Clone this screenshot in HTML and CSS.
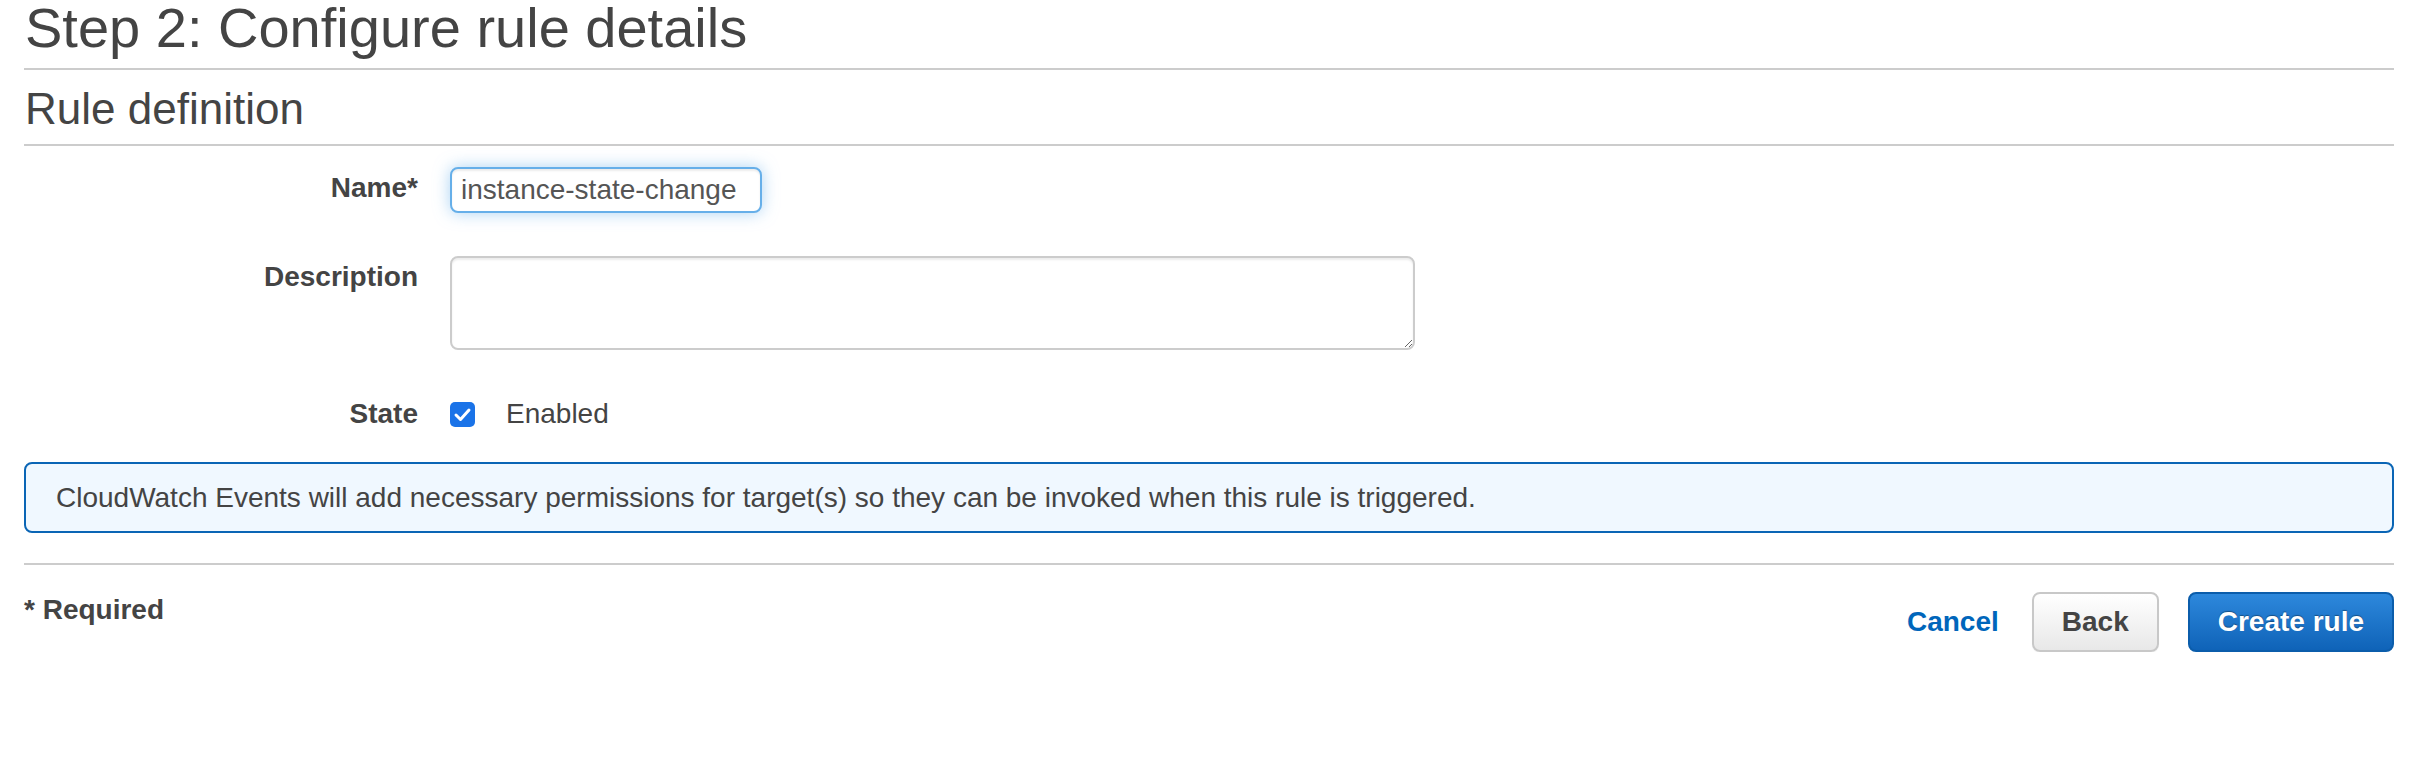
FILE: index.html
```html
<!DOCTYPE html>
<html lang="en">
<head>
<meta charset="utf-8">
<title>Step 2: Configure rule details</title>
<link rel="stylesheet" href="styles.css">
</head>
<body>
<div class="page">
  <h1 class="title">Step 2: Configure rule details</h1>
  <h2 class="section">Rule definition</h2>
  <div class="form">
    <div class="row">
      <label class="label" for="name">Name*</label>
      <input id="name" class="text-input" type="text" value="instance-state-change">
    </div>
    <div class="row">
      <label class="label" for="desc">Description</label>
      <textarea id="desc" class="textarea"></textarea>
    </div>
    <div class="row row-state">
      <span class="label">State</span>
      <span class="check">
        <svg viewBox="0 0 25 25" width="25" height="25">
          <rect x="0" y="0" width="25" height="25" rx="5" fill="#1a73e8"/>
          <path d="M6 13 L10.5 17.5 L19 8" fill="none" stroke="#fff" stroke-width="3" stroke-linecap="round" stroke-linejoin="round"/>
        </svg>
      </span>
      <span class="check-text">Enabled</span>
    </div>
  </div>
  <div class="info">CloudWatch Events will add necessary permissions for target(s) so they can be invoked when this rule is triggered.</div>
  <div class="divider"></div>
  <div class="footer">
    <div class="required">* Required</div>
    <div class="actions">
      <a class="cancel" href="#">Cancel</a>
      <button class="btn btn-back" type="button">Back</button>
      <button class="btn btn-primary" type="button">Create rule</button>
    </div>
  </div>
</div>
</body>
</html>
```
FILE: styles.css
```css
html, body {
  margin: 0;
  padding: 0;
  background: #fff;
}
body {
  font-family: "Liberation Sans", Arial, Helvetica, sans-serif;
  color: #444;
}
.page {
  padding: 0 26px 0 24px;
}
.title {
  margin: 0;
  font-size: 56px;
  font-weight: normal;
  line-height: 56px;
  padding: 0 0 12px 1px;
  border-bottom: 2px solid #ccc;
  color: #444;
}
.section {
  margin: 0;
  font-size: 44px;
  font-weight: normal;
  line-height: 52px;
  padding: 13px 0 9px 1px;
  border-bottom: 2px solid #ccc;
  color: #444;
}
.form {
  display: flex;
  flex-direction: column;
  gap: 43px;
  padding-top: 21px;
}
.row {
  display: flex;
  align-items: flex-start;
}
.label {
  width: 394px;
  flex: none;
  margin-right: 32px;
  text-align: right;
  font-weight: bold;
  font-size: 28px;
  line-height: 42px;
  color: #444;
}
.text-input {
  box-sizing: border-box;
  width: 312px;
  height: 46px;
  margin: 0;
  padding: 0 9px;
  border: 2px solid #66afe9;
  border-radius: 8px;
  font-family: "Liberation Sans", Arial, sans-serif;
  font-size: 28px;
  line-height: 42px;
  color: #555;
  background: #fff;
  outline: none;
  box-shadow: inset 0 2px 2px rgba(0,0,0,0.075), 0 0 16px rgba(102,175,233,0.55);
}
.textarea {
  box-sizing: border-box;
  width: 965px;
  height: 94px;
  margin: 0;
  padding: 10px;
  border: 2px solid #ccc;
  border-radius: 8px;
  font-family: "Liberation Sans", Arial, sans-serif;
  font-size: 28px;
  color: #555;
  background: #fff;
  outline: none;
  box-shadow: inset 0 2px 2px rgba(0,0,0,0.075);
  resize: both;
}
.row-state {
  align-items: center;
}
.check {
  display: flex;
  width: 25px;
  height: 25px;
}
.check-text {
  margin-left: 31px;
  font-size: 28px;
  line-height: 42px;
  color: #444;
}
.info {
  margin-top: 27px;
  border: 2px solid #0a65b5;
  border-radius: 8px;
  background: #f0f8ff;
  padding: 0 30px;
  font-size: 28px;
  line-height: 67px;
  color: #444;
}
.divider {
  margin-top: 30px;
  border-top: 2px solid #ccc;
}
.footer {
  margin-top: 27px;
  display: flex;
  justify-content: space-between;
  align-items: flex-start;
}
.required {
  font-weight: bold;
  font-size: 28px;
  line-height: 36px;
  color: #444;
}
.actions {
  display: flex;
  align-items: center;
}
.cancel {
  font-weight: bold;
  font-size: 28px;
  line-height: 60px;
  color: #0066bb;
  text-decoration: none;
  margin-right: 33px;
}
.btn {
  box-sizing: border-box;
  height: 60px;
  margin: 0;
  padding: 0 28px;
  border-radius: 8px;
  font-family: "Liberation Sans", Arial, sans-serif;
  font-weight: bold;
  font-size: 28px;
  line-height: 56px;
  cursor: pointer;
}
.btn-back {
  border: 2px solid #c8c8c8;
  background: linear-gradient(#ffffff, #e8e8e8);
  color: #444;
  margin-right: 29px;
  box-shadow: 0 1px 1px rgba(0,0,0,0.05);
}
.btn-primary {
  border: 2px solid #0b5dab;
  background: linear-gradient(#2d88dc, #0f63b8);
  color: #fff;
  text-shadow: 0 -1px 1px rgba(0,0,0,0.35);
}
```
